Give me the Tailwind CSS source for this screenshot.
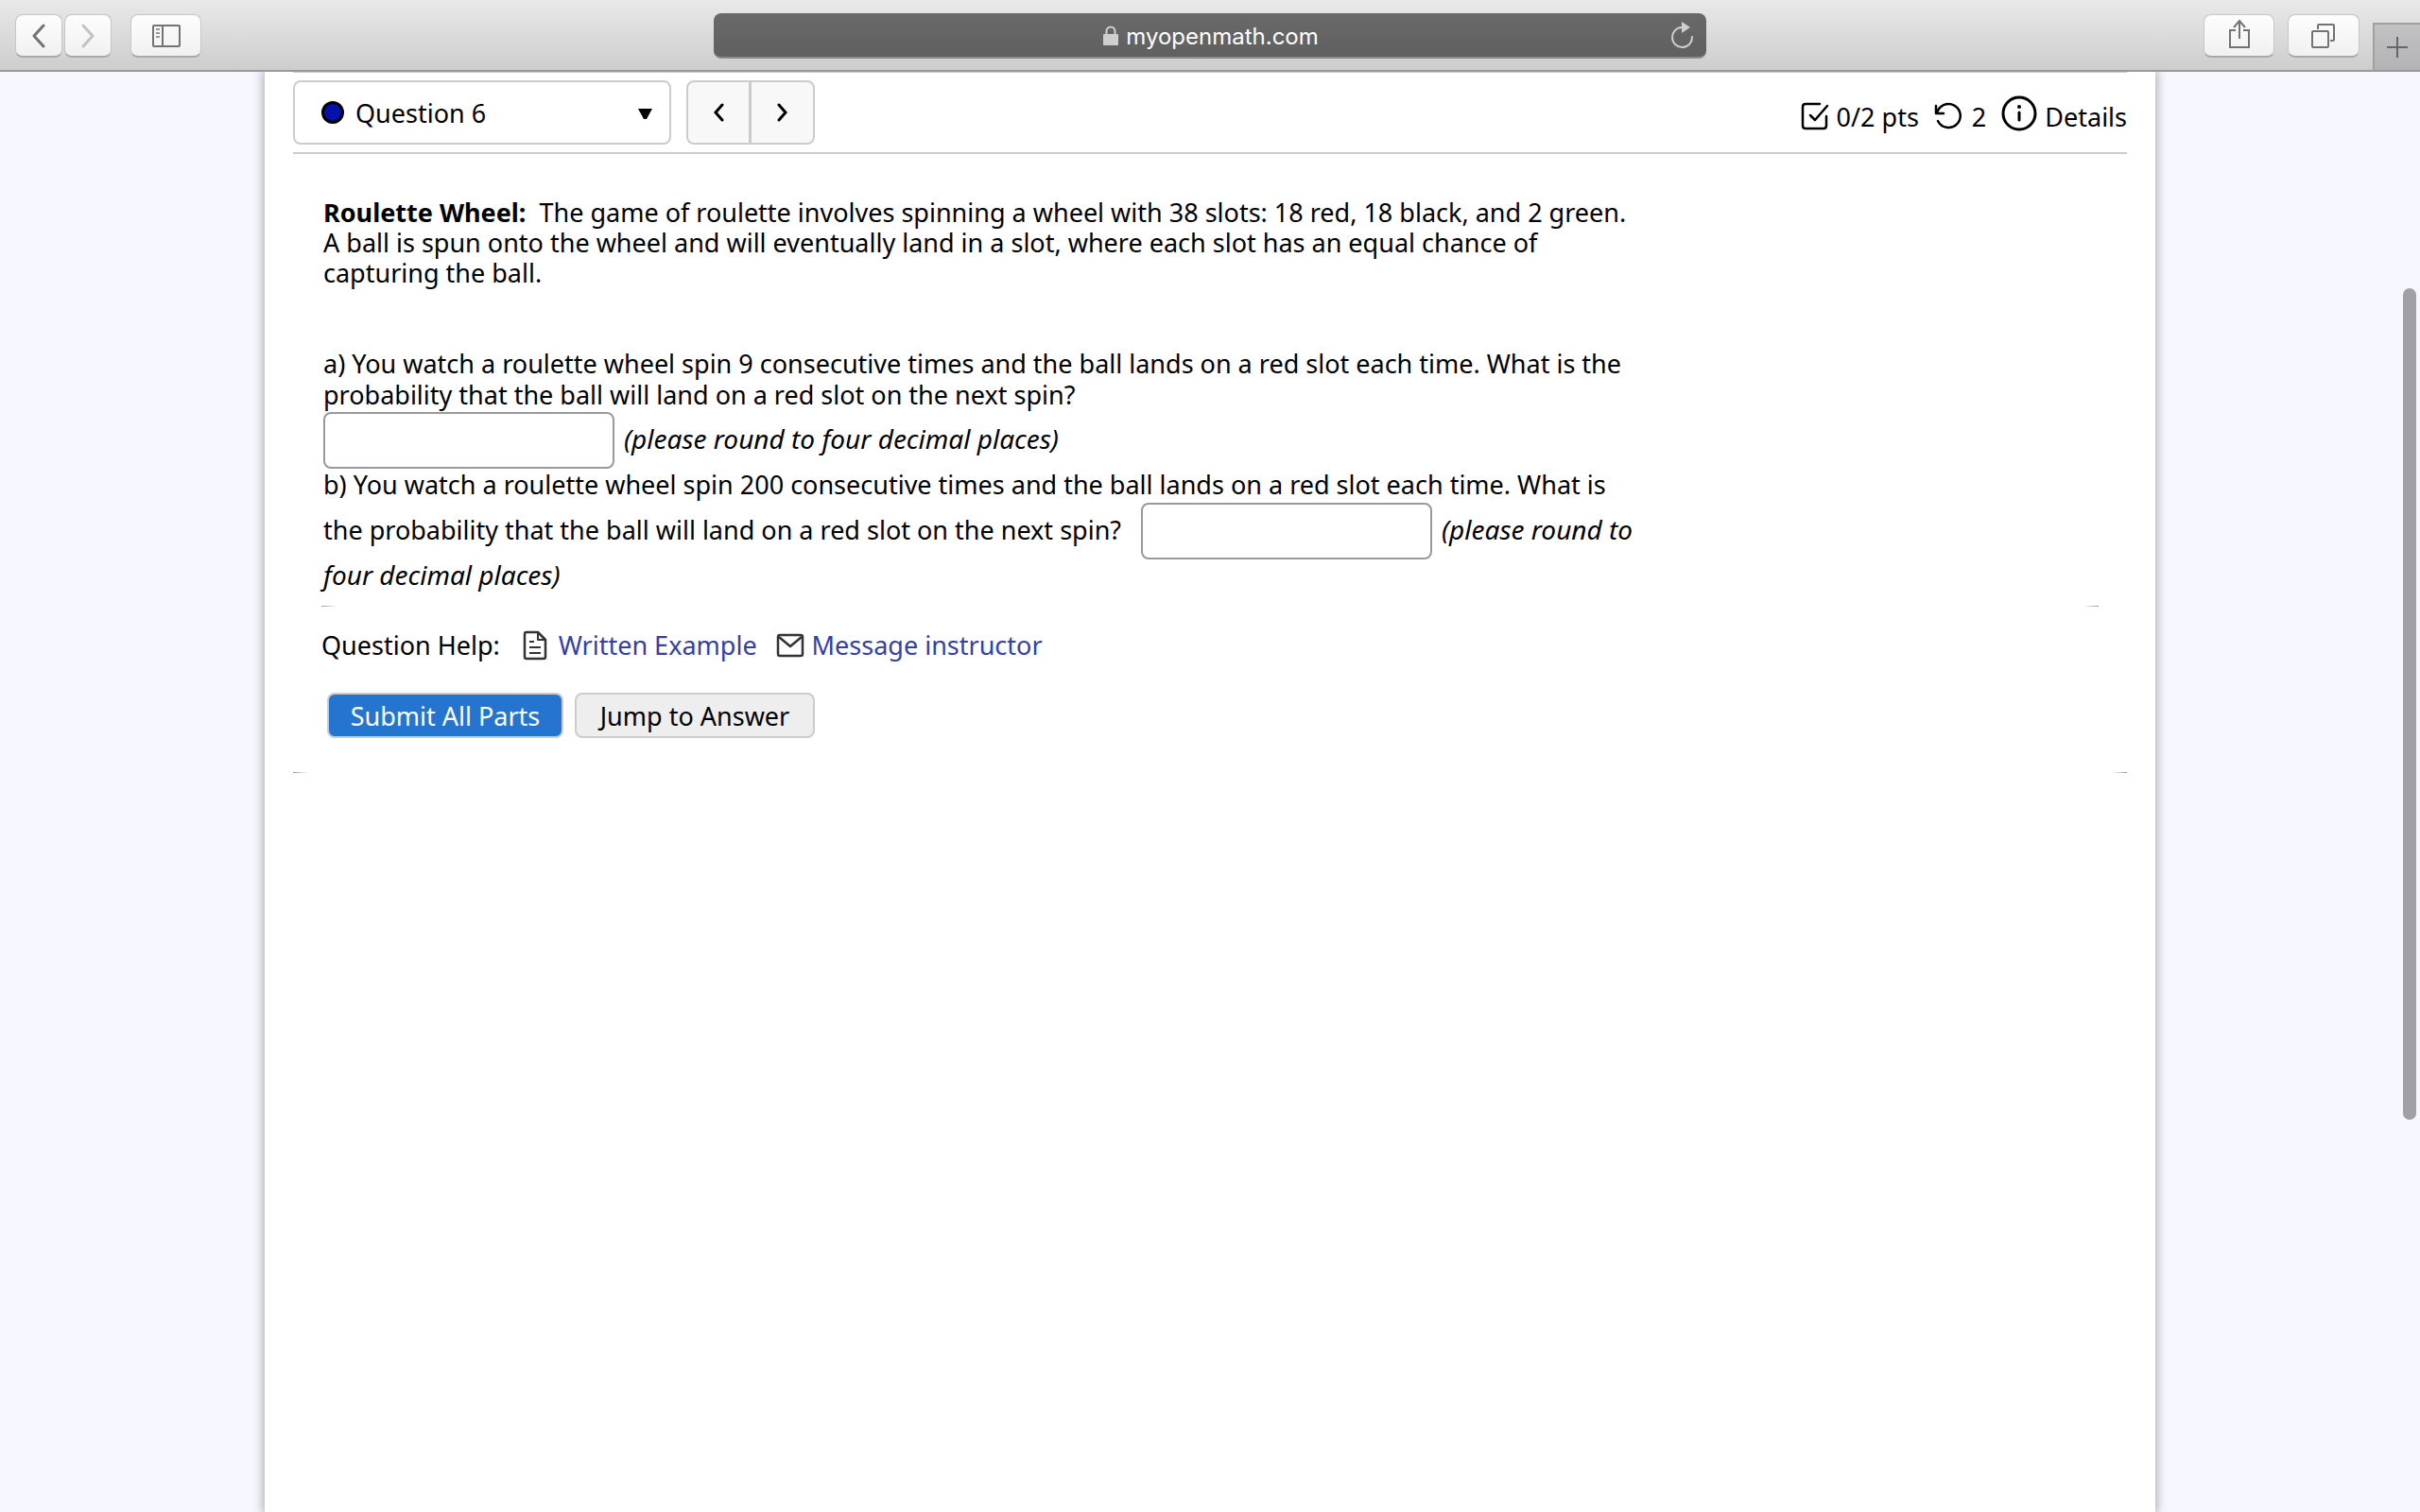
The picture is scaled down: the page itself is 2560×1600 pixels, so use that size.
<!DOCTYPE html>
<html lang="en">
<head>
<meta charset="utf-8">
<meta name="viewport" content="width=device-width, initial-scale=1">
<title>Question 6 - MyOpenMath</title>
<script src="https://cdn.jsdelivr.net/npm/@tailwindcss/browser@4"></script>
</head>
<body class="flex min-h-screen flex-col bg-[#f7f7ff] font-['Trebuchet_MS','Noto_Sans',sans-serif] text-[27px] leading-[33px] text-black">

<!-- Browser toolbar -->
<header class="relative z-10 grid h-[76px] grid-cols-[1fr_minmax(0,1050px)_1fr] border-b-2 border-[#9a999b] bg-linear-to-b from-[#e9e9ea] to-[#cdcdce] pt-0.5">
  <div class="flex items-center gap-5 pl-4">
    <div class="flex gap-0.5">
      <button aria-label="Back" class="flex h-[46px] w-[50px] items-center justify-center rounded-lg border border-b-2 border-[#c6c6c8] border-b-[#a9a9ab] bg-linear-to-b from-[#fdfdfd] to-[#f1f1f1]">
        <svg width="16" height="26" viewBox="0 0 16 26" fill="none" stroke="#737373" stroke-width="3" stroke-linecap="round" stroke-linejoin="round"><path d="M13 2 3 13l10 11"/></svg>
      </button>
      <button aria-label="Forward" class="flex h-[46px] w-[50px] items-center justify-center rounded-lg border border-b-2 border-[#c6c6c8] border-b-[#a9a9ab] bg-linear-to-b from-[#fdfdfd] to-[#f1f1f1]">
        <svg width="16" height="26" viewBox="0 0 16 26" fill="none" stroke="#c3c3c3" stroke-width="3" stroke-linecap="round" stroke-linejoin="round"><path d="m3 2 10 11L3 24"/></svg>
      </button>
    </div>
    <button aria-label="Show sidebar" class="flex h-[46px] w-[75px] items-center justify-center rounded-lg border border-b-2 border-[#c6c6c8] border-b-[#a9a9ab] bg-linear-to-b from-[#fdfdfd] to-[#f1f1f1]">
      <svg width="32" height="26" viewBox="0 0 32 26" fill="none" stroke="#737373" stroke-width="2"><rect x="2" y="2" width="28" height="22" rx="1"/><path d="M12 2v22"/><path stroke="#999" d="M5 6h4M5 10h4M5 14h4"/></svg>
    </button>
  </div>

  <div class="flex h-12 items-center self-center rounded-lg border-b-2 border-[#8a8a8a] bg-linear-to-b from-[#696969] to-[#606060] pr-3 pl-10">
    <div class="flex flex-1 items-center justify-center gap-2 pt-0.5">
      <svg width="16" height="22" viewBox="0 0 16 22"><path d="M3.500 10V6a4.500 4.500 0 0 1 9 0v4" fill="none" stroke="#cfcfcf" stroke-width="2"/><rect y="9" width="16" height="12" rx="1" fill="#cfcfcf"/></svg>
      <input aria-label="Address" value="myopenmath.com" class="field-sizing-content min-w-0 bg-transparent pt-0.5 font-[Inter,sans-serif] text-[24px] leading-8 text-white outline-none">
    </div>
    <button aria-label="Reload">
      <svg width="26" height="30" viewBox="0 0 26 30"><path d="M23 17A10.500 10.500 0 1 1 12 7" fill="none" stroke="#cfcfcf" stroke-width="2" stroke-linecap="round"/><path d="M12 1v12l9-6z" fill="#cfcfcf"/></svg>
    </button>
  </div>

  <div class="flex items-center justify-end gap-3.5">
    <button aria-label="Share" class="flex h-[46px] w-[75px] items-center justify-center rounded-lg border border-b-2 border-[#c6c6c8] border-b-[#a9a9ab] bg-linear-to-b from-[#fdfdfd] to-[#f1f1f1]">
      <svg width="24" height="32" viewBox="0 0 24 32" fill="none" stroke="#737373" stroke-width="2" class="mb-1"><path d="M8 12H2v18h20V12h-6M12 21V3M6 9l6-7 6 7"/></svg>
    </button>
    <button aria-label="Show tabs" class="flex h-[46px] w-[76px] items-center justify-center rounded-lg border border-b-2 border-[#c6c6c8] border-b-[#a9a9ab] bg-linear-to-b from-[#fdfdfd] to-[#f1f1f1]">
      <svg width="26" height="26" viewBox="0 0 26 26" fill="none" stroke="#737373" stroke-width="2"><rect x="1" y="8" width="17" height="17" rx="1"/><path d="M7 6V2q0-1 1-1h15q1 0 1 1v15q0 1-1 1h-3"/></svg>
    </button>
    <button aria-label="New tab" class="flex h-[50px] w-[50px] items-center justify-center self-end border-t-2 border-l-2 border-[#a0a0a2] bg-linear-to-b from-[#c2c2c5] to-[#b3b3b6]">
      <svg width="22" height="22" viewBox="0 0 22 22" stroke="#666" stroke-width="2"><path d="M11 0v22M0 11h22"/></svg>
    </button>
  </div>
</header>

<!-- Page -->
<main class="mx-auto w-full max-w-[2000px] flex-1 bg-white px-[30px] shadow-[0_0_10px_2px_rgba(0,0,0,0.3)]">
  <div class="flex items-center justify-between border-t border-b-2 border-t-[#ccc] border-b-[#ccc] py-2">
    <div class="flex gap-4">
      <div class="grid w-[400px] items-center">
        <select aria-label="Question" class="col-start-1 row-start-1 h-[68px] appearance-none rounded-lg border-2 border-[#ccc] bg-white pl-16">
          <option>Question 6</option>
        </select>
        <span class="pointer-events-none col-start-1 row-start-1 ml-[30px] size-6 rounded-full border-3 border-black bg-[#0511a8]"></span>
        <svg class="pointer-events-none col-start-1 row-start-1 mt-1 mr-5 justify-self-end" width="15" height="12" viewBox="0 0 15 12"><path d="M0 0h15L9 11H6z"/></svg>
      </div>
      <div class="flex">
        <button aria-label="Previous question" class="flex h-[68px] w-[68px] items-center justify-center rounded-l-lg border-2 border-[#ccc] bg-[#f8f8f8]">
          <svg width="12" height="20" viewBox="0 0 12 20" fill="none" stroke="#000" stroke-width="3" stroke-linecap="round"><path d="M10 2 3 10l7 8"/></svg>
        </button>
        <button aria-label="Next question" class="flex h-[68px] w-[68px] items-center justify-center rounded-r-lg border-2 border-l border-[#ccc] bg-[#f8f8f8]">
          <svg width="12" height="20" viewBox="0 0 12 20" fill="none" stroke="#000" stroke-width="3" stroke-linecap="round"><path d="m2 2 7 8-7 8"/></svg>
        </button>
      </div>
    </div>
    <div class="flex items-center gap-4 pt-2">
      <span class="flex items-center gap-2">
        <svg width="30" height="30" viewBox="0 0 30 30" fill="none" stroke="#000" stroke-width="2.500" stroke-linecap="round" stroke-linejoin="round"><path d="M20 2H5Q2 2 2 5v20q0 3 3 3h19q3 0 3-3V15M10 14l5 5L28 4"/></svg>
        0/2 pts
      </span>
      <span class="flex items-center gap-2.5">
        <svg width="30" height="30" viewBox="0 0 30 30" fill="none" stroke="#000" stroke-width="2.500" stroke-linecap="round" stroke-linejoin="round"><path d="M2 4v8h8M3 12A12.500 12.500 0 1 1 4 20"/></svg>
        2
      </span>
      <button class="flex items-center gap-2">
        <svg class="mb-1.5" width="38" height="38" viewBox="0 0 38 38" fill="none" stroke="#000" stroke-width="3" stroke-linecap="round"><circle cx="19" cy="19" r="17"/><path d="M19 18v8"/><path stroke-width="4" d="M19 12v.1"/></svg>
        Details
      </button>
    </div>
  </div>

  <div class="px-8 pt-[46px]">
    <p class="leading-8"><strong>Roulette Wheel:</strong>&nbsp; The game of roulette involves spinning a wheel with 38 slots: 18 red, 18 black, and 2 green.<br>
      A ball is spun onto the wheel and will eventually land in a slot, where each slot has an equal chance of<br>
      capturing the ball.</p>
    <p class="mt-[63px]"><label for="answer-a">a) You watch a roulette wheel spin 9 consecutive times and the ball lands on a red slot each time. What is the<br>
      probability that the ball will land on a red slot on the next spin?</label></p>
    <div class="flex items-center gap-2.5 pt-0.5">
      <input id="answer-a" type="text" class="h-[60px] w-[308px] rounded-lg border-2 border-[#999] bg-white px-3">
      <em class="pb-1 text-[28px]">(please round to four decimal places)</em>
    </div>
    <p><label for="answer-b">b) You watch a roulette wheel spin 200 consecutive times and the ball lands on a red slot each time. What is</label></p>
    <div class="flex items-center gap-2.5 pt-[3px]">
      <span class="w-[855px] pb-1">the probability that the ball will land on a red slot on the next spin?</span>
      <input id="answer-b" type="text" class="h-[60px] w-[308px] rounded-lg border-2 border-[#999] bg-white px-3">
      <em class="pb-1 text-[28px]">(please round to</em>
    </div>
    <p><em class="text-[28px]">four decimal places)</em></p>
  </div>

  <div class="mx-[30px] mt-4 h-px bg-[linear-gradient(to_right,#999,transparent_16px,transparent_calc(100%-16px),#999)]"></div>

  <div class="flex items-center px-[30px] pt-6">
    <span>Question Help:</span>
    <a href="#" class="ml-6 flex items-center gap-3 text-[#3440a6]">
      <svg width="26" height="32" viewBox="0 0 26 32" fill="none" stroke="#333" stroke-width="2.500" stroke-linejoin="round"><path d="M4 2h12l8 8v18q0 2-2 2H4q-2 0-2-2V4q0-2 2-2z"/><path stroke-width="2" d="M16 2v8h8M7 12h5M7 18h12M7 24h12"/></svg>
      Written Example
    </a>
    <a href="#" class="ml-5 flex items-center gap-2 text-[#3440a6]">
      <svg width="30" height="26" viewBox="0 0 30 26" fill="none" stroke="#333" stroke-width="2.500" stroke-linejoin="round"><rect x="2" y="2" width="26" height="22" rx="2"/><path d="m3 4 12 10L27 4"/></svg>
      Message instructor
    </a>
  </div>

  <div class="flex gap-3 px-9 pt-[34px]">
    <button class="h-12 w-[250px] rounded-lg border-2 border-[#ccc] bg-[#2575d0] text-white">Submit All Parts</button>
    <button class="h-12 w-[254px] rounded-lg border-2 border-[#ccc] bg-[#eee]">Jump to Answer</button>
  </div>

  <div class="mt-9 h-px bg-[linear-gradient(to_right,#999,transparent_16px,transparent_calc(100%-16px),#999)]"></div>
</main>

<!-- Overlay scrollbar thumb -->
<div class="fixed top-[305px] right-1 h-[880px] w-3.5 rounded-full bg-[#a1a0a6]"></div>
</body>
</html>
